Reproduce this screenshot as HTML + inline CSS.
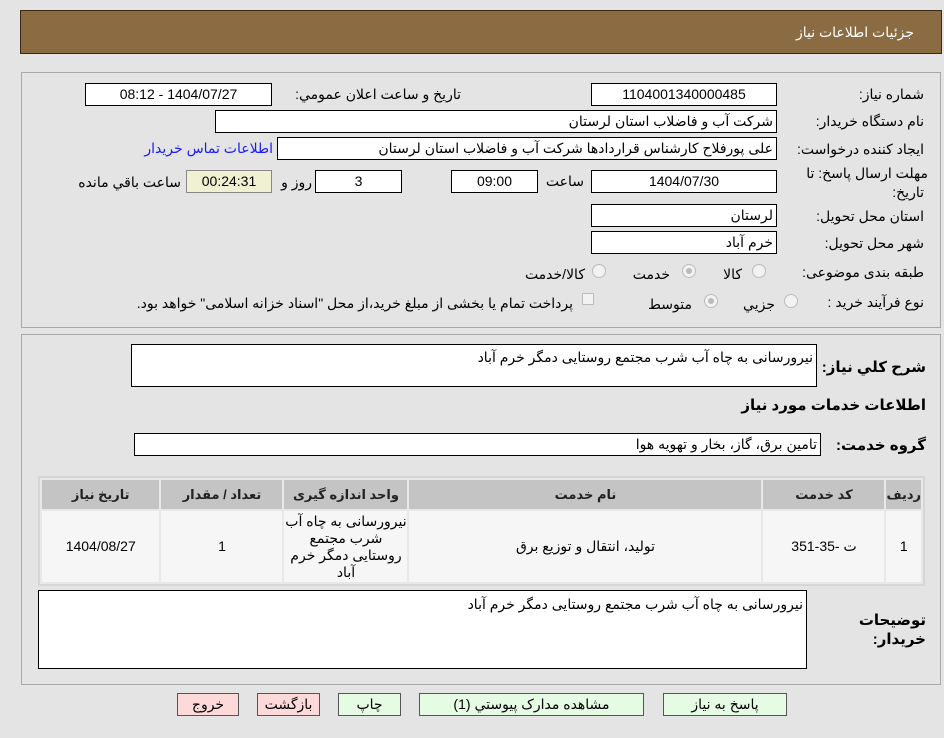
<!DOCTYPE html>
<html><head><meta charset="utf-8"><style>
*{box-sizing:border-box;margin:0;padding:0}
body{width:944px;height:738px;background:#e4e4e4;font-family:"Liberation Sans","DejaVu Sans",sans-serif;font-size:14px;color:#000;position:relative;overflow:hidden}
.a{position:absolute;white-space:nowrap}
.r{text-align:right;direction:rtl}
.box{position:absolute;background:#fff;border:1px solid #000;height:23px;line-height:21px;text-align:center;direction:rtl;white-space:nowrap;overflow:hidden}
.bl{text-align:right;padding-right:3px}
.panel{position:absolute;border:1px solid #a8a8a8;border-top-color:#a8a8a8}
.rad{position:absolute;width:14px;height:14px;border-radius:50%;border:1px solid #bbb;background:#f2f2f2}
.rad.on::after{content:"";position:absolute;left:3px;top:3px;width:6px;height:6px;border-radius:50%;background:#bbb}
b{font-weight:bold}
table{position:absolute;left:38px;top:476px;width:887px;border:2px solid #d6d6d6;border-collapse:separate;border-spacing:2px;background:#e8e8e8}
th{background:#c4c4c4;height:29px;font-size:13px;font-weight:bold;color:#222}
td{background:#f6f6f6;text-align:center;height:71px;font-size:14px;line-height:17px}
.btn{position:absolute;top:693px;height:23px;border:1px solid #555;background:#e6fbe3;text-align:center;line-height:21px;direction:rtl}
.red{background:#fdd9d9}
</style></head><body>
<div class="a" style="left:20px;top:10px;width:922px;height:44px;background:#8b6b42;border:1px solid #3a2a15"></div>
<div class="a r" style="right:30px;top:24px;color:#fff;font-size:14px">جزئیات اطلاعات نیاز</div>

<div class="panel" style="left:21px;top:72px;width:920px;height:256px"></div>
<div class="panel" style="left:21px;top:334px;width:920px;height:351px"></div>

<div class="a r" style="right:20px;top:86px">شماره نیاز:</div>
<div class="box" style="left:591px;top:83px;width:186px">1104001340000485</div>
<div class="a r" style="left:278px;top:86px;width:183px">تاریخ و ساعت اعلان عمومي:</div>
<div class="box" style="left:85px;top:83px;width:187px">1404/07/27 - 08:12</div>

<div class="a r" style="right:20px;top:113px">نام دستگاه خریدار:</div>
<div class="box bl" style="left:215px;top:110px;width:562px">شرکت آب و فاضلاب استان لرستان</div>

<div class="a r" style="right:20px;top:141px">ایجاد کننده درخواست:</div>
<div class="box bl" style="left:277px;top:137px;width:500px">علی پورفلاح کارشناس قراردادها شرکت آب و فاضلاب استان لرستان</div>
<div class="a r" style="left:138px;top:140px;width:135px;color:#1a1aff">اطلاعات تماس خریدار</div>

<div class="a r" style="right:16px;top:165px">مهلت ارسال پاسخ: تا</div>
<div class="a r" style="right:20px;top:184px">تاریخ:</div>
<div class="box" style="left:591px;top:170px;width:186px">1404/07/30</div>
<div class="a r" style="left:540px;top:173px;width:44px">ساعت</div>
<div class="box" style="left:451px;top:170px;width:87px">09:00</div>
<div class="box" style="left:315px;top:170px;width:87px">3</div>
<div class="a r" style="left:278px;top:174px;width:34px">روز و</div>
<div class="box" style="left:186px;top:170px;width:86px;background:#f0f0d2;border-color:#888">00:24:31</div>
<div class="a r" style="left:66px;top:174px;width:115px">ساعت باقي مانده</div>

<div class="a r" style="right:20px;top:208px">استان محل تحویل:</div>
<div class="box bl" style="left:591px;top:204px;width:186px">لرستان</div>
<div class="a r" style="right:20px;top:235px">شهر محل تحویل:</div>
<div class="box bl" style="left:591px;top:231px;width:186px">خرم آباد</div>

<div class="a r" style="right:20px;top:264px">طبقه بندی موضوعی:</div>
<div class="rad" style="left:752px;top:264px"></div><div class="a r" style="left:712px;top:266px;width:30px">کالا</div>
<div class="rad on" style="left:682px;top:264px"></div><div class="a r" style="left:625px;top:266px;width:45px">خدمت</div>
<div class="rad" style="left:592px;top:264px"></div><div class="a r" style="left:510px;top:266px;width:75px">کالا/خدمت</div>

<div class="a r" style="right:20px;top:294px">نوع فرآیند خرید :</div>
<div class="rad" style="left:784px;top:294px"></div><div class="a r" style="left:730px;top:296px;width:45px">جزيي</div>
<div class="rad on" style="left:704px;top:294px"></div><div class="a r" style="left:640px;top:296px;width:52px">متوسط</div>
<div class="a" style="left:582px;top:293px;width:12px;height:12px;border:1px solid #bbb;background:#f2f2f2"></div>
<div class="a r" style="left:88px;top:295px;width:485px">پرداخت تمام یا بخشی از مبلغ خرید،از محل "اسناد خزانه اسلامی" خواهد بود.</div>

<div class="a r" style="right:18px;top:358px;font-size:15px"><b>شرح كلي نياز:</b></div>
<div class="box bl" style="left:131px;top:344px;width:686px;height:43px;line-height:24px">نیرورسانی به چاه آب شرب مجتمع روستایی دمگر خرم آباد</div>
<div class="a r" style="right:18px;top:396px;font-size:15px"><b>اطلاعات خدمات مورد نیاز</b></div>
<div class="a r" style="right:18px;top:436px;font-size:15px"><b>گروه خدمت:</b></div>
<div class="box bl" style="left:134px;top:433px;width:687px">تامین برق، گاز، بخار و تهویه هوا</div>

<table dir="rtl"><tr><th style="width:26px">رديف</th><th style="width:121px">کد خدمت</th><th style="width:352px">نام خدمت</th><th style="width:123px">واحد اندازه گیری</th><th style="width:121px">تعداد / مقدار</th><th>تاریخ نیاز</th></tr>
<tr><td>1</td><td dir="ltr">ت -35-351</td><td>تولید، انتقال و توزیع برق</td><td>نیرورسانی به چاه آب شرب مجتمع روستایی دمگر خرم آباد</td><td>1</td><td>1404/08/27</td></tr></table>

<div class="a r" style="right:18px;top:611px;font-size:15px;line-height:19px"><b>توضیحات<br>خریدار:</b></div>
<div class="box bl" style="left:38px;top:590px;width:769px;height:79px;line-height:26px">نیرورسانی به چاه آب شرب مجتمع روستایی دمگر خرم آباد</div>

<div class="btn" style="left:663px;width:124px">پاسخ به نیاز</div>
<div class="btn" style="left:419px;width:225px">مشاهده مدارک پیوستي (1)</div>
<div class="btn" style="left:338px;width:63px">چاپ</div>
<div class="btn red" style="left:257px;width:63px">بازگشت</div>
<div class="btn red" style="left:177px;width:62px">خروج</div>
</body></html>
